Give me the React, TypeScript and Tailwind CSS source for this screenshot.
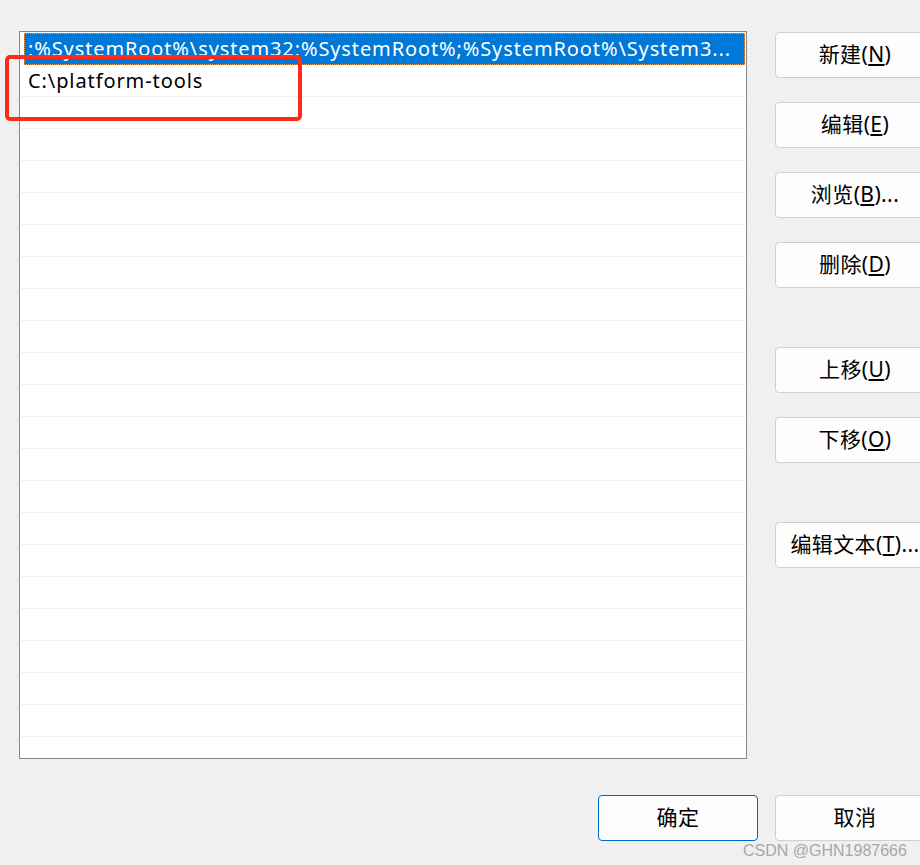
import React from "react";

const font = { fontFamily: '"Noto Sans", "Noto Sans CJK SC", sans-serif' };

type Btn = { label: string; key: string; suffix?: string; gap: string };

const sideButtons: Btn[] = [
  { label: "新建", key: "N", gap: "mt-0" },
  { label: "编辑", key: "E", gap: "mt-[24px]" },
  { label: "浏览", key: "B", suffix: "...", gap: "mt-[24px]" },
  { label: "删除", key: "D", gap: "mt-[24px]" },
  { label: "上移", key: "U", gap: "mt-[59px]" },
  { label: "下移", key: "O", gap: "mt-[24px]" },
  { label: "编辑文本", key: "T", suffix: "...", gap: "mt-[59px]" },
];

const WinButton = ({ b, primary }: { b: Btn; primary?: boolean }) => (
  <button
    className={
      "w-[160px] h-[46px] shrink-0 rounded-[4px] bg-[#fdfdfd] border text-[21px] tracking-[0.4px] text-black flex items-center justify-center whitespace-nowrap " +
      (primary ? "border-[#0067c0]" : "border-[#d0d0d0]") +
      " " +
      b.gap
    }
  >
    <span>
      {b.label}
      {b.key && (
        <>
          (<span className="underline underline-offset-2">{b.key}</span>)
        </>
      )}
      {b.suffix}
    </span>
  </button>
);

export default function App() {
  const emptyRows = Array.from({ length: 20 });

  return (
    <div
      className="relative w-[920px] h-[865px] overflow-hidden bg-[#f0f0f0] text-black"
      style={font}
    >
      <div className="flex pt-[31px] pl-[19px]">
        {/* path list */}
        <div className="w-[728px] h-[728px] shrink-0 bg-white border border-[#828790] overflow-hidden">
          <div className="h-[33px] pt-[1px] pl-[4px] pr-[1px]">
            <div className="h-[32px] bg-[#0078d7] text-white text-[20px] flex items-center pl-[4px] overflow-hidden whitespace-nowrap outline-1 outline-dotted outline-[#e8a25a] -outline-offset-1 tracking-[0.88px]">
              ;%SystemRoot%\system32;%SystemRoot%;%SystemRoot%\System3...
            </div>
          </div>
          <div className="h-[32px] mx-[1px] border-b border-[#f0f0f0] flex items-center pl-[7px] text-[20px] tracking-[0.9px]">
            C:\platform-tools
          </div>
          {emptyRows.map((_, i) => (
            <div key={i} className="h-[32px] mx-[1px] border-b border-[#f0f0f0]" />
          ))}
        </div>

        {/* side buttons */}
        <div className="flex flex-col pl-[28px] pt-[1px]">
          {sideButtons.map((b) => (
            <WinButton key={b.key} b={b} />
          ))}
        </div>
      </div>

      {/* dialog buttons */}
      <div className="flex gap-[17px] pl-[598px] pt-[36px]">
        <WinButton b={{ label: "确定", key: "", gap: "mt-0" }} primary />
        <WinButton b={{ label: "取消", key: "", gap: "mt-0" }} />
      </div>

      {/* annotation box */}
      <div className="absolute left-[5px] top-[55px] w-[297px] h-[66px] border-[4px] border-[#ff2a1a] rounded-[5px]" />

      {/* watermark */}
      <div
        className="absolute left-[743px] top-[839px] text-[16px] text-[#a8a8a8] whitespace-nowrap"
        style={{ fontFamily: '"Liberation Sans", Arial, sans-serif' }}
      >
        CSDN @GHN1987666
      </div>
    </div>
  );
}
